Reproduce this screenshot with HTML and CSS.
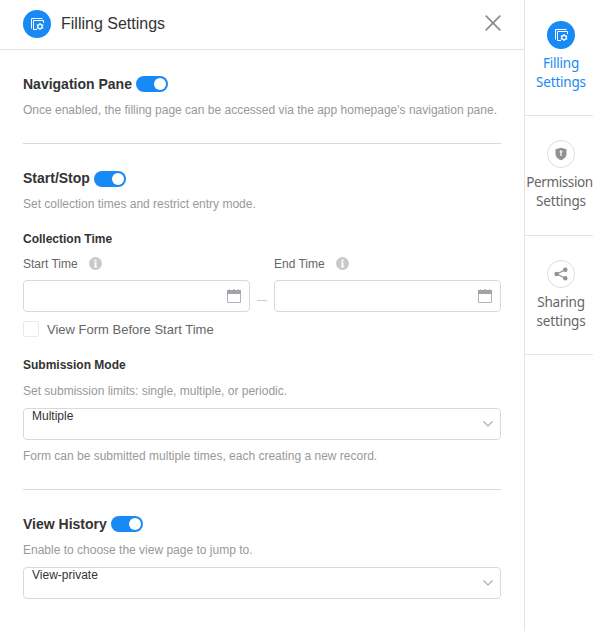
FILE: index.html
```html
<!DOCTYPE html>
<html lang="en">
<head>
<meta charset="utf-8">
<title>Filling Settings</title>
<link rel="stylesheet" href="styles.css">
</head>
<body>
<svg class="defs" width="0" height="0">
  <symbol id="form" viewBox="0 0 28 28">
    <path d="M8.500 18.500V8.500H19.500M20.500 13V10.500H10.500V19.500H14" fill="none" stroke="#fff" stroke-width="1"/>
    <circle cx="17" cy="16.500" r="2.200" fill="none" stroke="#fff" stroke-width="1.200"/>
    <path d="M17 12.900v1.400M17 18.700v1.400M13.800 14.700l1.300.75M19 17.600l1.300.75M13.800 18.300l1.300-.75M19 15.450l1.300-.75" stroke="#fff" stroke-width="1.200"/>
  </symbol>
  <symbol id="info" viewBox="0 0 14 14">
    <circle cx="6.500" cy="6.500" r="6.500" fill="#c9c9c9"/>
    <path d="M5.600 2.600h1.900v1.800h-1.900zM5 5.300h2.500v4.200h.8v1H4.900v-1h.8V6.300H5z" fill="#fff"/>
  </symbol>
  <symbol id="calendar" viewBox="0 0 14 14">
    <path d="M.5 3v10.500h13V3" fill="none" stroke="#b0b2b5"/>
    <path d="M0 1h2V.3h1V1h3V.3h2V1h3V.3h1V1h2v4H0z" fill="#a0a4a9"/>
  </symbol>
  <symbol id="chevron" viewBox="0 0 10 6">
    <path d="M.5.5 5 5 9.500.5" fill="none" stroke="#a5abb0" stroke-width="1.100"/>
  </symbol>
</svg>
<div class="app">
  <main class="panel">
    <header class="header">
      <span class="badge badge-on"><svg width="28" height="28"><use href="#form"/></svg></span>
      <h1 class="title">Filling Settings</h1>
      <svg class="close" width="16" height="16" viewBox="0 0 16 16"><path d="M.7.7l14.600 14.600M15.300.7L.7 15.300" stroke="#8c8c8c" stroke-width="1.700"/></svg>
    </header>
    <section class="section nav-section">
      <div class="heading"><h2>Navigation Pane</h2><span class="toggle"></span></div>
      <p class="hint">Once enabled, the filling page can be accessed via the app homepage's navigation pane.</p>
    </section>
    <section class="section time-section">
      <div class="heading"><h2 class="raised">Start/Stop</h2><span class="toggle"></span></div>
      <p class="hint hint-near">Set collection times and restrict entry mode.</p>
      <h3 class="subhead">Collection Time</h3>
      <div class="range">
        <div class="field">
          <div class="label">Start Time<svg width="14" height="14"><use href="#info"/></svg></div>
          <div class="input"><svg width="14" height="14"><use href="#calendar"/></svg></div>
        </div>
        <span class="dash"></span>
        <div class="field">
          <div class="label">End Time<svg width="14" height="14"><use href="#info"/></svg></div>
          <div class="input"><svg width="14" height="14"><use href="#calendar"/></svg></div>
        </div>
      </div>
      <div class="check"><span class="box"></span><span class="check-text">View Form Before Start Time</span></div>
      <h3 class="subhead mode">Submission Mode</h3>
      <p class="hint">Set submission limits: single, multiple, or periodic.</p>
      <div class="select"><span>Multiple</span><svg width="10" height="6"><use href="#chevron"/></svg></div>
      <p class="hint after">Form can be submitted multiple times, each creating a new record.</p>
    </section>
    <section class="section history-section">
      <div class="heading"><h2>View History</h2><span class="toggle"></span></div>
      <p class="hint">Enable to choose the view page to jump to.</p>
      <div class="select"><span>View-private</span><svg width="10" height="6"><use href="#chevron"/></svg></div>
    </section>
  </main>
  <nav class="side">
    <div class="tab tab-on">
      <span class="badge badge-on"><svg width="28" height="28"><use href="#form"/></svg></span>
      <span class="tab-text">Filling<br>Settings</span>
    </div>
    <div class="tab">
      <span class="badge"><svg width="12" height="14" viewBox="0 0 12 14"><path d="M6 .8 11.500 2.300V7c0 3-2.500 5.200-5.500 6.300C3 12.200.5 10 .5 7V2.300z" fill="#919191"/><path d="M6 3.200a1.500 1.500 0 0 1 .7 2.800v3H5.300V6A1.500 1.500 0 0 1 6 3.200z" fill="#eee"/></svg></span>
      <span class="tab-text"><span class="wide">Permission</span><br>Settings</span>
    </div>
    <div class="tab tab-last">
      <span class="badge"><svg width="14" height="14" viewBox="0 0 14 14"><path d="M11.300 2.800 2.600 7l8.700 4.200" fill="none" stroke="#999" stroke-width="1.300"/><circle cx="11.300" cy="2.800" r="2.200" fill="#919191"/><circle cx="2.600" cy="7" r="2.200" fill="#919191"/><circle cx="11.300" cy="11.200" r="2.200" fill="#919191"/></svg></span>
      <span class="tab-text">Sharing<br>settings</span>
    </div>
  </nav>
</div>
</body>
</html>
```
FILE: styles.css
```css
* { box-sizing: border-box; }
body { margin: 0; background: #fff; font: 12px/20px "Liberation Sans", Arial, sans-serif; color: #333; }
h1, h2, h3, p { margin: 0; }
svg { display: block; flex: none; }
.defs { position: absolute; }
.app { display: flex; height: 631px; overflow: hidden; }
.panel { width: 524px; flex: none; }
.header { display: flex; align-items: center; height: 50px; padding: 0 23px 2px; border-bottom: 1px solid #e4e4e4; }
.title { margin-left: 10px; font-size: 16px; font-weight: 400; }
.close { margin: -1px 0 0 auto; }
.badge { display: flex; align-items: center; justify-content: center; width: 28px; height: 28px; border: 1px solid #ddd; border-radius: 50%; flex: none; }
.badge-on { border: 0; background: #188af6; }
.section { margin: 0 23px; }
.nav-section { height: 94px; padding-top: 22px; border-bottom: 1px solid #d9d9d9; }
.time-section { height: 346px; padding-top: 23px; border-bottom: 1px solid #d9d9d9; }
.history-section { padding-top: 22px; }
.heading { display: flex; align-items: center; gap: 4px; height: 24px; }
.heading h2 { font-size: 14px; line-height: 24px; }
.heading .raised { padding-bottom: 2px; }
.toggle { display: flex; justify-content: flex-end; width: 32px; height: 16px; padding: 2px; border-radius: 8px; background: #188af6; }
.toggle::after { content: ""; width: 12px; height: 12px; border-radius: 50%; background: #fff; }
.hint { height: 28px; line-height: 28px; color: #999; white-space: nowrap; }
.hint-near { height: 26px; line-height: 26px; }
.subhead { height: 24px; margin-top: 10px; font-size: 12px; line-height: 24px; }
.range { display: flex; justify-content: space-between; }
.field { width: 227px; }
.label { display: flex; align-items: center; gap: 11px; height: 25px; color: #666; }
.input { display: flex; align-items: center; justify-content: flex-end; height: 32px; margin-top: 4px; padding-right: 8px; border: 1px solid #d9d9d9; border-radius: 4px; }
.dash { width: 10px; height: 1px; margin-top: 49px; background: #ccc; }
.check { display: flex; align-items: center; gap: 8px; height: 18px; margin-top: 8px; font-size: 13px; color: #666; }
.check-text { padding-top: 1px; }
.box { width: 16px; height: 16px; border: 1px solid #eaeaea; border-radius: 2px; }
.mode { margin-top: 15px; }
.select { display: flex; align-items: center; justify-content: space-between; height: 32px; margin-top: 3px; padding: 0 7px 0 8px; border: 1px solid #d9d9d9; border-radius: 4px; }
.select span { align-self: flex-start; line-height: 14px; }
.after { margin-top: 2px; }
.side { flex: 1; min-width: 0; border-left: 1px solid #e4e4e4; font: 13.5px/19px "Noto Sans", sans-serif; letter-spacing: -.2px; color: #666; }
.tab { display: flex; flex-direction: column; align-items: center; gap: 5px; height: 120px; padding-top: 24px; border-bottom: 1px solid #e4e4e4; text-align: center; white-space: nowrap; }
.tab .badge { margin-left: 4px; }
.tab-text { margin-left: 4px; }
.wide { margin: 0 0 0 -3px; letter-spacing: -.4px; }
.tab-on { height: 116px; padding-top: 21px; color: #188af6; }
.tab-last { height: 119px; }
```
